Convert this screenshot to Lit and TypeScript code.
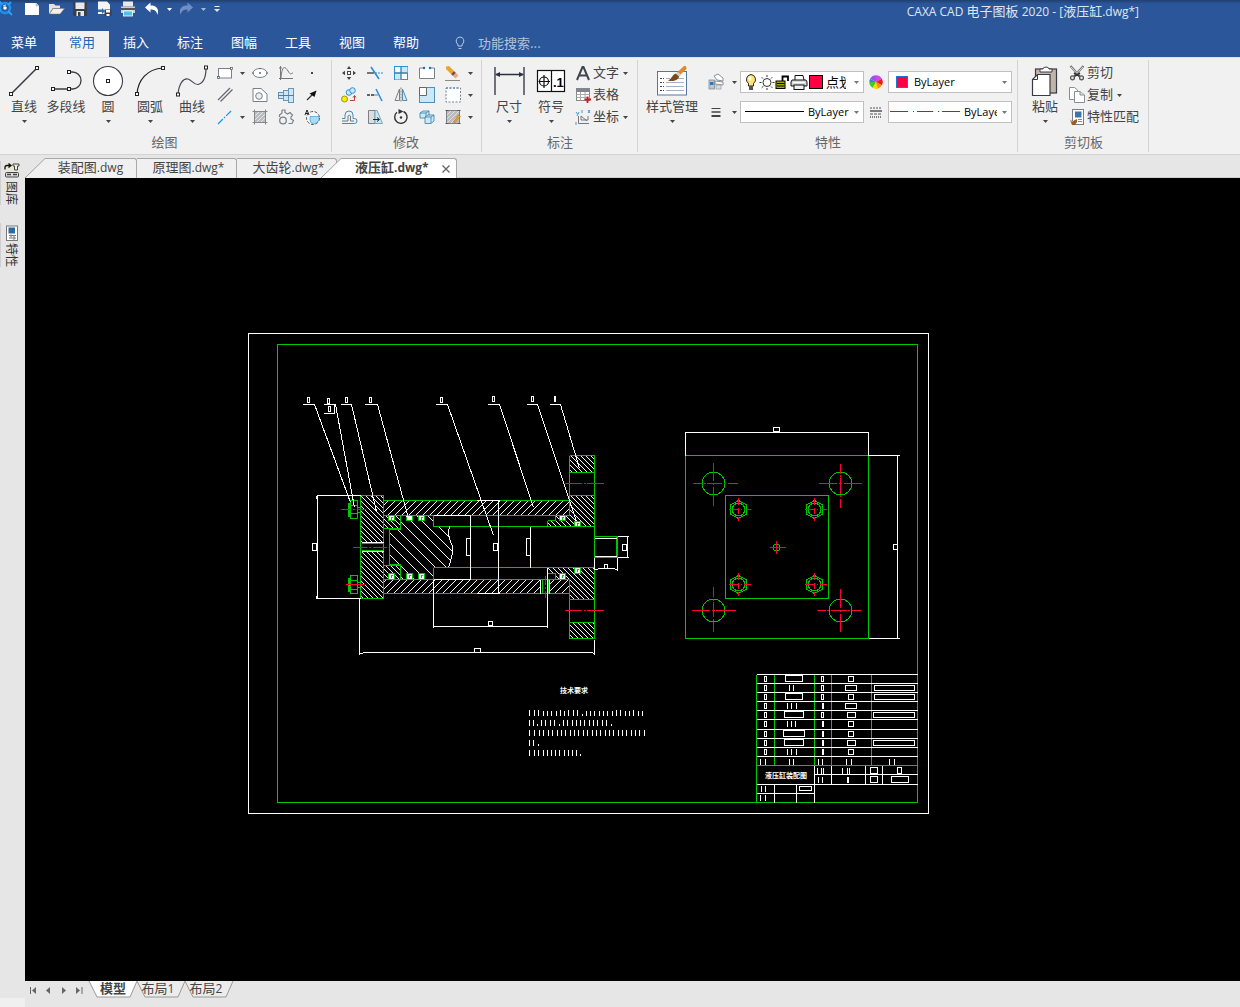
import { LitElement, html, svg, css, nothing } from "lit";
import { customElement } from "lit/decorators.js";

/* ---------- icons ---------- */

const sq = (x: number, y: number) =>
  svg`<rect x=${x - 1.5} y=${y - 1.5} width="3" height="3" fill="#fff" stroke="#222" stroke-width="1"/>`;

const BIG: Record<string, unknown> = {
  line: svg`<path d="M2 28L28 2" stroke="#3c3c46" stroke-width="1.6"/>${sq(2, 28)}${sq(28, 2)}`,
  pline: svg`<path d="M2 23H18M18 6H21.5A8.5 8.5 0 0 1 21.5 23H18" stroke="#3c3c46" stroke-width="1.3" fill="none"/>${sq(2, 23)}${sq(18, 23)}${sq(18, 6)}`,
  circle: svg`<circle cx="15" cy="15" r="14.5" fill="#fff" stroke="#3c3c46" stroke-width="1.1"/>${sq(15, 15)}`,
  arc: svg`<path d="M2 28C3 14 12 3 28 2" stroke="#222" stroke-width="1.2" fill="none"/>${sq(2, 28)}${sq(28, 2)}`,
  spline: svg`<path d="M1 28C2 18 6 12 11 13C15 14 17 19 21 18.500C27 17 29 11 29 2" stroke="#4a4a52" stroke-width="1.2" fill="none"/>${sq(1, 28.5)}${sq(29, 1.5)}`,
  dim: svg`<path d="M1 1V29M30 1V29M2 8.500H29" stroke="#2b3040" stroke-width="1.3"/><path d="M1 8.500l5-2.500v5zM30 8.500l-5-2.500v5z" fill="#2b3040"/>`,
  symbol: svg`<rect x="1.500" y="4.500" width="27" height="21" fill="#fff" stroke="#111" stroke-width="1.2"/><path d="M15.500 4V26M2.500 15.500H14M8 9V22" stroke="#111" stroke-width="1.2"/><circle cx="8" cy="15.500" r="4.500" fill="none" stroke="#111" stroke-width="1.2"/><text x="17" y="20.500" font-family="Liberation Sans, sans-serif" font-size="13" font-weight="700" fill="#000">.1</text>`,
  style: svg`<rect x=".500" y="5.500" width="29" height="23.500" fill="#fff" stroke="#54789a"/><path d="M3 12.500H7M3 16.500H7M3 20.500H7M3 24.500H7" stroke="#446" stroke-dasharray="2 1"/><path d="M9 12.500H13M20 12.500H27M9 16.500H27M9 20.500H27M9 24.500H27" stroke="#9fb2c8"/><path d="M27 0L29 0L29.500 3L22 10L19.500 7z" fill="#e08a2a"/><path d="M21 6l3 3-2 2-3.500-2.500z" fill="#c9d0d8"/><path d="M18.500 7.500C15 9 15 13 11 14.500C16 16 22 14 22 10.500z" fill="#7a4a1c"/>`,
  paste: svg`<rect x="5.500" y="3" width="21" height="24" fill="#bfb5a8" stroke="#3a3a44" stroke-width="1.2"/><path d="M10 4.500V3H13C13 .500 19 .500 19 3H22V6H10z" fill="#fff" stroke="#3a3a44"/><path d="M7.500 8.500H20V29.500H2.500V13.500z" fill="#fff" stroke="#3a3a44" stroke-width="1.2"/><path d="M7.500 8.500V13.500H2.500" fill="none" stroke="#3a3a44"/>`,
};

const B = "#2f8fd0";
const L = "#c8e9fa";
const G = "#7b8088";

const SMALL: Record<string, unknown> = {
  rect: svg`<rect x="3.500" y="5.500" width="13" height="9.500" fill="#fff" stroke="${G}"/><rect x="2.500" y="13.500" width="2" height="2" fill="#fff" stroke="#555" stroke-width=".7"/><rect x="15.500" y="4.500" width="2" height="2" fill="#fff" stroke="#555" stroke-width=".7"/>`,
  parallel: svg`<path d="M3 15L15 3M5.500 16.500L17.500 4.500" stroke="#666a72" stroke-width="1.3"/>`,
  axis: svg`<path d="M3 17L17 3" stroke="#1e9be0" stroke-width="1.3" stroke-dasharray="7 1.500 1.500 1.500"/>`,
  ellipse: svg`<ellipse cx="10" cy="10" rx="7" ry="4.500" fill="#fff" stroke="${G}"/><path d="M9 10h2M10 9v2M2 10h2M16 10h2M9 5.500h2" stroke="#666"/>`,
  hole: svg`<path d="M3 3.500H11L17 9V16.500H3z" fill="#fff" stroke="${G}"/><circle cx="9" cy="11" r="3.300" fill="#eee" stroke="${G}"/>`,
  hatch: svg`<rect x="4.500" y="4.500" width="11" height="11" fill="#b9bcc0" stroke="${G}"/><path d="M5 9l4-4M5 13l8-8M7 15l8-8M11 15l4-4" stroke="#f0f0f0" stroke-width=".8"/><path d="M2.500 4.500H17.500M2.500 15.500H17.500M4.500 2.500V17.500M15.500 2.500V17.500" stroke="#888"/>`,
  func: svg`<path d="M4.500 3V17M3 15.500H17M3 5H6" stroke="#777" fill="none"/><path d="M5 15C6 2 9 3 12 8S15 10 17 10" stroke="#777" fill="none"/>`,
  shaft: svg`<rect x="2.500" y="7.500" width="6" height="6" fill="${L}" stroke="#6b93b5"/><rect x="7.500" y="5.500" width="5" height="10" fill="${L}" stroke="#6b93b5"/><rect x="12.500" y="3.500" width="5" height="14" fill="${L}" stroke="#6b93b5"/><path d="M2 10.500H18" stroke="#678"/>`,
  gear: svg`<path d="M6 3H9V5.500L11.500 7L14 5.500L16.500 8L15 10V12L17.500 13.500L16 16.500H12.500" fill="none" stroke="${G}" stroke-width="1.2"/><path d="M6 3V6L3.500 8V10" fill="none" stroke="${G}" stroke-width="1.2"/><circle cx="7" cy="13.500" r="3.300" fill="none" stroke="${G}" stroke-width="1.3"/>`,
  point: svg`<rect x="9" y="9" width="2" height="2" fill="#444"/>`,
  arrow: svg`<path d="M5 15L11 9" stroke="#333" stroke-width="1.2"/><path d="M14.500 5.500L12.500 12L7.500 8.500z" fill="#111"/>`,
  detail: svg`<circle cx="11" cy="11" r="6.500" fill="#f6f6f6" stroke="#555" stroke-dasharray="3 1.500"/><path d="M8 9.500H17V13Q15 17 11.500 17Q8 16 8 13z" fill="#a8dcf5" stroke="${B}" stroke-width=".6"/><path d="M3 8L5 3L7 8M3.500 6.500H6.500" stroke="#222" fill="none"/>`,
  move: svg`<rect x="8.500" y="8.500" width="3" height="3" fill="#fff" stroke="#444"/><path d="M10 3l2.200 3H7.800zM10 17l2.200-3H7.800zM3 10l3-2.200v4.400zM17 10l-3-2.200v4.400z" fill="#444"/>`,
  trim: svg`<path d="M2 10H9" stroke="#333" stroke-width="1.300"/><path d="M10 10H18" stroke="${B}" stroke-dasharray="2 1"/><path d="M6 4L14 16" stroke="${B}" stroke-width="1.600"/>`,
  array: svg`<rect x="3.500" y="3.500" width="13" height="13" fill="#fff" stroke="${B}"/><rect x="10" y="4" width="6.500" height="6" fill="${L}"/><rect x="4" y="10" width="6" height="6.500" fill="${L}"/><path d="M10 3.500V16.500M3.500 10H16.500" stroke="#3a7da8" stroke-width="1.300"/>`,
  break: svg`<path d="M5 5H2.500V15.500H17.500V5H15" fill="#fff" stroke="${G}"/><path d="M5 5H8M12 5H15" stroke="${G}"/><circle cx="7" cy="5" r="1.200" fill="#1473b8"/><circle cx="13" cy="5" r="1.200" fill="#1473b8"/>`,
  erase: svg`<path d="M3 3.500L6 3L11 8L8 11L3 6z" fill="#f0a22c"/><path d="M11 8L13 10L10 13L8 11z" fill="#7a5236"/><path d="M13 10L15.500 12.500L12.500 15.500L10 13z" fill="#e8a888"/><path d="M2 17.500H17" stroke="#888"/>`,
  copyObj: svg`<circle cx="5.500" cy="14" r="3" fill="#ffee00" stroke="#8a7a20" stroke-width=".8"/><circle cx="10" cy="7.500" r="2.800" fill="${L}" stroke="${B}"/><circle cx="13.500" cy="5.500" r="2.800" fill="${L}" stroke="${B}"/><path d="M11 15.500H15.500V11M14 12.500l1.500-2 1.500 2" stroke="#b22" fill="none" stroke-width=".9"/>`,
  extend: svg`<path d="M2 10H9" stroke="#333" stroke-width="1.300" stroke-dasharray="3 1"/><path d="M9 10H13" stroke="${B}"/><path d="M11 4L17 16" stroke="${B}" stroke-width="1.500"/>`,
  mirror: svg`<path d="M8.500 4V15.500H4z" fill="#eee" stroke="${G}"/><path d="M11.500 4V15.500H16z" fill="${L}" stroke="#5a8cb0"/><path d="M10 2.500V17.500" stroke="#777" stroke-dasharray="2 1"/>`,
  scale: svg`<rect x="2.500" y="2.500" width="15" height="15" fill="${L}" stroke="#4f8fb8"/><path d="M2.500 2.500H9.500V10.500H2.500z" fill="#fff" stroke="#666"/>`,
  stretch: svg`<rect x="3" y="3" width="14.500" height="14" fill="#fff" stroke="${G}" stroke-dasharray="2 1.500"/><path d="M3 3H17" stroke="${B}" stroke-dasharray="2 1.500"/>`,
  offset: svg`<path d="M3 16.500H15.500A2.500 2.500 0 0 0 15.500 11.500H14V8A4 4 0 0 0 6 8V11.500H3" fill="#e4f3fb" stroke="#5487ad"/><path d="M3 14H9V9A1.500 1.500 0 0 1 11.500 9V14H15" fill="none" stroke="#777"/>`,
  chamfer: svg`<path d="M3.500 3.500H10V16.500H3.500z" fill="#ddd" stroke="${G}"/><path d="M10 3.500H12L17.500 16.500H10z" fill="${L}" stroke="#7ab"/><path d="M8 12.500H14M12 10.500l2.500 2-2.500 2" stroke="#222" fill="none"/>`,
  rotate: svg`<path d="M12.500 4.500A6.200 6.200 0 1 1 6 5.300" fill="none" stroke="#333" stroke-width="1.400"/><path d="M7.500 2l5 2.500-5 2.500z" fill="#333"/><circle cx="10" cy="10.500" r="1.200" fill="#333"/>`,
  block: svg`<path d="M3 6L6 4H12V9L9 11H3zM3 6H9V11M9 6L12 4" fill="${L}" stroke="#3e7ba6" stroke-width=".8"/><path d="M8 10L11 8H17V14L14 16.500H8zM8 10H14V16M14 10L17 8" fill="${L}" stroke="#3e7ba6" stroke-width=".8"/>`,
  hatchEdit: svg`<rect x="3.500" y="3.500" width="13" height="13" fill="#bbb" stroke="${G}"/><path d="M4 8l4-4M4 12l8-8M4 16L16 4M8 16l8-8M12 16l4-4" stroke="#eee" stroke-width=".7"/><path d="M2.500 3.500h3M14.500 3.500h3M2.500 16.500h3M14.500 16.500h3" stroke="#555"/><path d="M10.500 15L15.500 8L17.500 9.500L12.500 15.500z" fill="#f0a22c" stroke="#8a5a2a" stroke-width=".5"/>`,
  letterA: svg`<path d="M4 17L9.500 4H10.500L16 17M6 12.500H14" fill="none" stroke="#3f4450" stroke-width="2"/>`,
  table: svg`<rect x="3.500" y="3.500" width="13" height="12" fill="#fff" stroke="#888"/><rect x="3" y="3" width="14" height="4" fill="#80858e"/><path d="M3.500 9.500H16.500M3.500 12.500H16.500M7.500 7V15.500M12 7V15.500" stroke="#aaa"/><path d="M14.500 11.500V18M11.500 14.500H18" stroke="#c81e1e" stroke-width="1.800"/>`,
  coord: svg`<path d="M5.500 9V16.500H16M8 9V13H15V9M8 9L14 14" fill="none" stroke="#777"/><path d="M9 3v3M15 3l2 3M17 3l-2 3M3 5l1.500 2M6 5l-2 4M3 15v3" stroke="${B}" stroke-width=".9"/>`,
  layers: svg`<path d="M8 4L12 2L17 6V9L11 8zM9 9L17 10V13L9 12z" fill="#fff" stroke="#8c9096"/><rect x="3" y="8" width="5.500" height="9" fill="#b9c6d4" stroke="#76808c" stroke-width=".7"/><rect x="4" y="10" width="3.500" height="3" fill="#2a7ab8"/><rect x="10" y="13" width="5" height="4" fill="#ddd" stroke="#999" stroke-width=".7"/>`,
  weight: svg`<path d="M5.500 6.500H14.500" stroke="#444"/><path d="M5.500 10H14.500" stroke="#444" stroke-width="1.500"/><path d="M5.500 14H14.500" stroke="#444" stroke-width="2"/>`,
  wheel: svg`<path d="M10 10L4.200 6.650A6.700 6.700 0 0 1 10 3.300z" fill="#a050f0"/><path d="M10 10V3.300A6.700 6.700 0 0 1 15.800 6.650z" fill="#c84ae8"/><path d="M10 10L15.800 6.650A6.700 6.700 0 0 1 15.800 13.350z" fill="#f01818"/><path d="M10 10L15.800 13.350A6.700 6.700 0 0 1 10 16.700z" fill="#ff8c00"/><path d="M10 10L12 16.400A6.700 6.700 0 0 1 6 15.400z" fill="#ffd800"/><path d="M10 10L6.500 15.700A6.700 6.700 0 0 1 3.300 10z" fill="#40c832"/><path d="M10 10H3.300A6.700 6.700 0 0 1 4.200 6.650z" fill="#3c78f0"/>`,
  ltype: svg`<path d="M4 6H16" stroke="#555" stroke-dasharray="2 1"/><path d="M4 9H16" stroke="#555" stroke-width="1.500"/><path d="M4 12H16" stroke="#555" stroke-dasharray="3 1"/><path d="M4 15H16" stroke="#555" stroke-width="1.500" stroke-dasharray="1 1"/>`,
  cut: svg`<path d="M3.500 3L12 12.500M16.500 3L8 12.500" stroke="#777" stroke-width="2.200"/><path d="M4 4L12 12.500M16 4L8 12.500" stroke="#eee" stroke-width=".8"/><path d="M7 10L13 13.500M13 10L7 13.500" stroke="#333" stroke-width="1.800"/><circle cx="5.500" cy="14.800" r="2" fill="#ddd" stroke="#555" stroke-width="1.200"/><circle cx="14.500" cy="14.800" r="2" fill="#ddd" stroke="#555" stroke-width="1.200"/>`,
  copy: svg`<path d="M2.500 2.500H7.500L10.500 5V14.500H2.500z" fill="#fff" stroke="#8a8e94"/><path d="M7.500 6.500H13L17.500 10V17.500H7.500z" fill="#fff" stroke="#8a8e94"/><path d="M13 6.500V10H17.500" fill="#ddd" stroke="#8a8e94"/>`,
  match: svg`<rect x="5.500" y="2.500" width="11" height="15" fill="#fff" stroke="#75808c"/><rect x="8" y="4.500" width="6.500" height="6" fill="#3a78ac"/><path d="M11 12.500H15M11 14.500H15" stroke="#888"/><path d="M3 13L6 14L10 12V15L8 18H5z" fill="#a05a22"/><path d="M2.500 12l3 3" stroke="#ddd"/>`,
  bulb: svg`<path d="M10 2.500A5 5 0 0 0 7.500 11.500V14H12.500V11.500A5 5 0 0 0 10 2.500z" fill="#ffe27a" stroke="#111" stroke-width=".9"/><ellipse cx="9" cy="6.500" rx="1.600" ry="2.200" fill="#fffbe0"/><rect x="8" y="14" width="4" height="4" fill="#555"/>`,
  sun: svg`<circle cx="10" cy="10.500" r="4" fill="#fff" stroke="#333"/><path d="M10 3V5M10 16V18M2.500 10.500H4.500M15.500 10.500H17.500M4.700 5.200L6 6.500M14 14.500L15.300 15.800M4.700 15.800L6 14.500M14 6.500L15.300 5.200" stroke="#333"/>`,
  lock: svg`<rect x="3" y="9" width="9" height="7.500" fill="#a8a800" stroke="#000"/><path d="M4 11.500H11.500M4 14H11.500" stroke="#000"/><path d="M9.500 9V4.500H15V9" fill="none" stroke="#000" stroke-width="1.800"/>`,
  printer: svg`<path d="M6 8V3.500H14L15 8" fill="#fff" stroke="#111"/><path d="M3 8H17L18 10V14H2V10z" fill="#d8d8d8" stroke="#111"/><rect x="5" y="13" width="10" height="4.500" fill="#e8f4f8" stroke="#111"/><path d="M4 10.500H16" stroke="#fff"/>`,
  qNew: svg`<path d="M3 4H14L17 7V16H3z" fill="#fff"/><path d="M14 4V7H17" fill="#cfd8e6" stroke="#9ab" stroke-width=".6"/>`,
  qOpen: svg`<path d="M3 5H8L9.500 6.500H14V9H7L3 15z" fill="#e8e2d4"/><path d="M7 9.500H18.500L14 15H3.500z" fill="#f6f1e6" stroke="#777" stroke-width=".5"/>`,
  qSave: svg`<path d="M3 3H17V17H4L3 16z" fill="#3a3f48"/><rect x="5.500" y="3.500" width="9" height="6.500" fill="#e6e9ee"/><rect x="6.500" y="12" width="7.500" height="5" fill="#e6e9ee"/><rect x="8" y="13" width="2.500" height="4" fill="#3a3f48"/>`,
  qSaveAs: svg`<path d="M4 2.500H13L16 5.500V15H4z" fill="#f4f4f4"/><path d="M4 10.500H8V9L11 12L8 15V13H4z" fill="#2f6ab0"/><rect x="10.500" y="10.500" width="7" height="6.500" fill="#3a3f48"/><rect x="12" y="11" width="4" height="2.500" fill="#fff"/><rect x="12.500" y="15" width="3" height="2" fill="#fff"/>`,
  qPrint: svg`<rect x="5" y="2.500" width="10" height="5" fill="#e8e8e8"/><path d="M3 7.500H17V14H3z" fill="#c9ccd2"/><path d="M3 10H17" stroke="#555" stroke-width="2"/><rect x="5.500" y="12" width="9" height="5" fill="#48c4e8" stroke="#fff" stroke-width=".8"/>`,
  qUndo: svg`<path d="M3 8.500L8.500 3.500V6.500C14 6.500 17.500 9 15.500 16C14.500 11.500 12 10.500 8.500 10.500V13.500z" fill="#fff"/>`,
  qRedo: svg`<path d="M17 8.500L11.500 3.500V6.500C6 6.500 2.500 9 4.500 16C5.500 11.500 8 10.500 11.500 10.500V13.500z" fill="#6f8fc2"/>`,
  qMore: svg`<path d="M7.500 7.500H12.500" stroke="#fff"/><path d="M7 10H13L10 13z" fill="#dfe6f2"/>`,
  logo: svg`<circle cx="11" cy="9" r="5" fill="none" stroke="#1e8fe8" stroke-width="2.600"/><circle cx="11" cy="9" r="1.800" fill="#fff"/><path d="M5 2L8 5M14 12L18 16M4 13L7 11M17 3L14 6" stroke="#2aa0ff" stroke-width="1.800"/><path d="M9 7L12 6" stroke="#bfe2ff"/>`,
  hint: svg`<path d="M10 4A4 4 0 0 0 7.500 11C8 12 8 12 8 13H12C12 12 12 12 12.500 11A4 4 0 0 0 10 4z" fill="none" stroke="#b9c7df"/><path d="M8.500 15.500H11.500" stroke="#b9c7df"/>`,
  library: svg`<rect x="3" y="2" width="14" height="7" fill="#e9e8cf"/><path d="M3 8.500V6.500Q3 4.500 5 4.500H8M6.500 2.500l2.500 2-2.500 2" stroke="#111" stroke-width="1.300" fill="none"/><path d="M11 3H17V5H15.500V9H12.500V5H11z" fill="#eee" stroke="#444"/><rect x="3.500" y="11.500" width="13" height="4.500" rx="1" fill="#ddd" stroke="#444"/><path d="M5 13.500H9M11 13.500H15" stroke="#444" stroke-width="1.500"/>`,
  props: svg`<rect x="4.500" y="3" width="11" height="14.500" fill="#fff" stroke="#777"/><rect x="6.500" y="4.500" width="6.500" height="6" fill="#2a6aa0"/><path d="M7 12.500H14M7 15H14M9 11.500v3M12 13v4" stroke="#777"/>`,
};

const small = (n: string) =>
  html`<svg class="ic" viewBox="0 0 20 20" width="20" height="20" aria-hidden="true">${SMALL[n]}</svg>`;
const big = (n: string) =>
  html`<svg class="big-ic" viewBox="0 0 30 30" width="30" height="30" aria-hidden="true">${BIG[n]}</svg>`;
const caret = () =>
  html`<svg class="caret" viewBox="0 0 5 3" width="5" height="3" aria-hidden="true"><path d="M0 0H5L2.500 3z" fill="currentColor"/></svg>`;

/* ---------- drawing ---------- */

type Seg = [number, number, number, number];
const line = (s: Seg[]) => s.map(([a, b, c, d]) => `M${a} ${b}L${c} ${d}`).join("");
const box = (s: Seg[]) => s.map(([a, b, c, d]) => `M${a} ${b}H${c}V${d}H${a}Z`).join("");

const LEADERS: Seg[] = [
  [302, 404, 314, 404], [314, 404, 350, 502],
  [323, 404, 335, 404], [335, 404, 354, 507], [323, 413, 334, 413], [334, 404, 334, 413],
  [340, 404, 351, 404], [351, 404, 376, 511],
  [364, 404, 376, 404], [377, 404, 408, 518],
  [435, 404, 447, 404], [447, 404, 493, 535],
  [487, 404, 499, 404], [499, 404, 533, 507],
  [526, 404, 537, 404], [537, 404, 576, 521],
  [549, 404, 560, 404], [560, 404, 579, 468],
];
const LEADER_NUMS: Seg[] = [
  [307, 397, 309, 402], [327, 398, 329, 403], [328, 406, 330, 411], [345, 397, 347, 402],
  [369, 397, 371, 402], [440, 397, 442, 402], [492, 396, 494, 401], [531, 396, 533, 401], [554, 396, 555, 401],
];
const SECTION_GREEN: Seg[] = [
  [383, 500, 569, 500], [383, 515, 569, 515], [383, 579, 569, 579], [383, 593, 569, 593],
  [433, 515, 433, 526], [433, 567, 433, 579], [433, 526, 594, 526], [433, 567, 594, 567],
  [400, 515, 400, 529], [389, 529, 400, 529], [389, 528, 400, 528], [400, 565, 400, 579], [389, 565, 400, 565], [389, 564, 400, 564],
  [361, 543, 383, 543], [361, 550, 383, 550],
  [350, 505, 357, 505], [350, 513, 357, 513], [357, 507, 360, 507], [357, 512, 360, 512],
  [350, 580, 357, 580], [350, 589, 357, 589], [357, 582, 360, 582], [357, 587, 360, 587],
  [348, 502, 348, 516], [349, 502, 349, 516], [348, 577, 348, 591], [349, 577, 349, 591],
  [569, 472, 594, 472], [569, 495, 594, 495], [569, 599, 594, 599], [569, 622, 594, 622],
  [569, 455, 569, 515], [569, 579, 569, 638], [594, 455, 594, 638], [569, 455, 594, 455], [569, 638, 594, 638],
  [547, 526, 547, 520], [547, 520, 555, 520], [555, 520, 555, 515],
  [547, 573, 555, 573], [555, 573, 555, 579], [542, 579, 542, 593], [548, 579, 548, 593],
  [594, 536, 617, 536], [594, 557, 617, 557], [616, 536, 616, 557], [617, 536, 617, 557],
];
const SECTION_BOXES: Seg[] = [
  [360, 495, 383, 598], [383, 528, 389, 565], [350, 500, 357, 518], [350, 575, 357, 593],
];
const SEALS: Seg[] = [
  [388, 515, 394, 520], [406, 515, 412, 520], [418, 515, 424, 520],
  [388, 573, 394, 579], [406, 573, 412, 579], [418, 573, 424, 579],
  [559, 515, 565, 520], [574, 521, 580, 526], [574, 567, 580, 573], [559, 573, 565, 579],
];
const DIMS: Seg[] = [
  [317, 495, 317, 598], [316, 495, 360, 495], [316, 598, 360, 598], [316, 495, 316, 498], [316, 595, 316, 598],
  [361, 542, 383, 542], [361, 551, 383, 551],
  [470, 515, 470, 579], [433, 515, 470, 515], [433, 579, 470, 579], [498, 500, 498, 593],
  [476, 500, 499, 500], [476, 593, 499, 593], [530, 526, 530, 567],
  [540, 579, 540, 593], [549, 579, 549, 593], [547, 567, 547, 627], [433, 579, 433, 627], [433, 626, 547, 626],
  [359, 598, 359, 654], [359, 653, 362, 653], [362, 652, 592, 652], [592, 653, 594, 653], [594, 639, 594, 654],
  [594, 538, 616, 538], [594, 556, 616, 556], [617, 536, 628, 536], [617, 557, 628, 557], [627, 536, 627, 557],
  [617, 557, 617, 570], [594, 557, 594, 569], [597, 568, 614, 568], [594, 569, 597, 569], [614, 569, 617, 569],
  [685, 431, 685, 455], [868, 431, 868, 455], [685, 432, 868, 432],
  [868, 455, 899, 455], [868, 638, 899, 638], [897, 455, 897, 638],
];
const DIM_BOXES: Seg[] = [
  [312, 543, 316, 550], [466, 538, 470, 555], [493, 543, 497, 550], [526, 538, 530, 555],
  [488, 621, 492, 625], [474, 648, 480, 652], [622, 544, 626, 550], [604, 564, 607, 568],
  [773, 427, 779, 431], [893, 544, 897, 549],
];
const CENTER_LINES: Seg[] = [
  [341, 509, 350, 509], [353, 509, 354, 509], [357, 509, 365, 509], [346, 584, 364, 584],
  [353, 547, 366, 547], [369, 547, 370, 547], [373, 547, 386, 547],
  [545, 576, 545, 584], [545, 587, 545, 588], [545, 591, 545, 597],
  [565, 483, 581, 483], [584, 483, 585, 483], [587, 483, 603, 483],
  [565, 610, 581, 610], [584, 610, 585, 610], [587, 610, 603, 610],
  [693, 483, 702, 483], [704, 483, 705, 483], [707, 483, 721, 483], [724, 483, 725, 483], [728, 483, 737, 483],
  [713, 463, 713, 480], [713, 483, 713, 484], [713, 487, 713, 505],
  [819, 483, 836, 483], [839, 483, 841, 483], [844, 483, 861, 483],
  [840, 464, 840, 473], [840, 475, 840, 476], [840, 478, 840, 493], [840, 495, 840, 496], [840, 499, 840, 507],
  [692, 610, 709, 610], [712, 610, 714, 610], [716, 610, 735, 610],
  [713, 587, 713, 596], [713, 599, 713, 600], [713, 602, 713, 616], [713, 619, 713, 620], [713, 622, 713, 631],
  [817, 610, 825, 610], [827, 610, 828, 610], [831, 610, 846, 610], [848, 610, 849, 610], [852, 610, 860, 610],
  [840, 589, 840, 607], [840, 610, 840, 611], [840, 614, 840, 631],
];
const HOLES = [[713, 483], [840, 483], [713, 610], [840, 610]];
const BOLTS = [[738, 509], [814, 509], [738, 584], [814, 584]];

const ROW_Y = [674, 683, 692, 701, 710, 719, 729, 738, 747, 756];
const PARTS = [
  { name: [785, 802], qty: 0, mat: [848, 853] },
  { ticks: [789, 793], qty: 0, mat: [845, 856], note: 874 },
  { name: [785, 802], qty: 0, mat: [848, 853], note: 874 },
  { ticks: [787, 791, 796], qty: 1, mat: [845, 856] },
  { name: [784, 803], qty: 0, mat: [847, 855], note: 873 },
  { ticks: [787, 791, 795], qty: 1, mat: [848, 853] },
  { name: [783, 804], qty: 1, mat: [848, 853] },
  { name: [784, 803], qty: 1, mat: [847, 855], note: 873 },
  { ticks: [787, 791, 796], qty: 1, mat: [848, 853] },
] as { name?: number[]; ticks?: number[]; qty: number; mat: number[]; note?: number }[];

const partRow = (p: (typeof PARTS)[number], i: number) => {
  const y = ROW_Y[i] + 2;
  const b = y + 5;
  const boxes: Seg[] = [[764, y, 766, b], [p.mat[0], y, p.mat[1], b], [p.qty ? 822 : 821, y, 823, b]];
  if (p.name) boxes.push([p.name[0], y - 1, p.name[1], b]);
  if (p.note) boxes.push([p.note, y, 914, b]);
  return svg`<path d=${box(boxes) + line((p.ticks ?? []).map((x) => [x, y - 1, x, b] as Seg))}/>`;
};

/* Each note row lists tick offsets; a negative offset is a punctuation mark. */
const NOTES: [number, number[]][] = [
  [709, [0, 5, 9, 14, 18, 22, 27, 31, 35, 39, 44, 48, -53, 57, 61, 65, 70, 74, 78, 83, 87, 91, 96, 100, 104, 109, 113]],
  [719, [0, 4, -8, 12, 16, 21, 25, -30, 34, 38, 43, 47, 51, 55, 60, 64, 68, 73, 77, -82]],
  [729, [0, 5, 10, 14, 19, 23, 28, 32, 36, 41, 45, 49, 54, 58, 63, 67, 71, 76, 80, 84, 89, 93, 97, 102, 106, 110, 115]],
  [739, [0, 4, -9]],
  [749, [0, 5, 9, 14, 18, 22, 26, 30, 35, 39, 43, 47, -51]],
];
const SHORT = new Set([14, 18, 22, 27, 35, 57, 61, 65, 70, 74, 78, 83, 96, 100, 109, 113]);
const notes = NOTES.map(([y, xs]) =>
  line(xs.map((x) => {
    const top = x < 0 ? y + 4 : y === 709 && SHORT.has(x) ? y + 1 : y;
    return [529 + Math.abs(x), top, 529 + Math.abs(x), y + 6] as Seg;
  })),
).join("");

const hatch = (id: string, n: number, back: boolean) => svg`
  <pattern id=${id} width=${n} height=${n} patternUnits="userSpaceOnUse">
    ${Array.from({ length: n }, (_, i) => svg`<rect x=${back ? i : n - 1 - i} y=${i} width="1" height="1" fill="#fff"/>`)}
  </pattern>`;

const drawing = () => html`
  <svg class="sheet" viewBox="25 178 1215 803" preserveAspectRatio="xMinYMin meet" shape-rendering="crispEdges"
    role="img" aria-label="液压缸装配图">
    <defs>${hatch("hb", 5, true)}${hatch("hf", 7, false)}${hatch("hw", 11, true)}</defs>
    <g>
      <path fill="url(#hb)" d="M361 496H383V542H361zM361 552H383V598H361zM383 516H400V528H383zM383 566H400V579H383zM570 456H594V472H570zM570 496H594V526H570zM570 568H594V599H570zM570 623H594V638H570zM555 516H570V526H547V521H555zM547 568H570V579H555V573H547z"/>
      <path fill="url(#hf)" d="M384 501H569V515H384zM384 580H540V593H384zM550 580H569V593H550z"/>
      <path fill="url(#hw)" d="M401 516H433V527H449Q447 534 450 541Q454 548 451 556Q450 562 448 567H433V579H401V564H390V530H401z"/>
    </g>
    <g transform="translate(.5 .5)" fill="none" stroke-width="1">
      <g stroke="#00c800">
        <rect x="277" y="344" width="640" height="458"/>
        <path d=${line(SECTION_GREEN) + box(SECTION_BOXES)}/>
        <path d=${box(SEALS)} fill="#fff"/>
        <path d="M685 455H868V638H685zM725 495H828V598H725z"/>
        ${HOLES.map(([x, y]) => svg`<circle cx=${x} cy=${y} r="11.3"/>`)}
        ${BOLTS.map(([x, y]) => svg`<circle cx=${x} cy=${y} r="6.3"/><path d="M${x} ${y - 9}L${x + 8} ${y - 4.500}V${y + 4.500}L${x} ${y + 9}L${x - 8} ${y + 4.500}V${y - 4.500}Z"/>`)}
        <circle cx="776" cy="547" r="3.3"/>
      </g>
      <g stroke="#fff">
        <rect x="248" y="333" width="680" height="480"/>
        <path d=${line(LEADERS) + box(LEADER_NUMS) + line(DIMS) + box(DIM_BOXES)}/>
        <path d=${SEALS.map(([a, b]) => `M${a + 3} ${b + 1}v3M${a + 2} ${b + 2}h2`).join("")} stroke="#00c800"/>
        <path d="M449 526Q447 534 450 541Q454 548 451 556Q450 562 448 567"/>
        <path d="M406 516H410V519H408z" fill="#fff"/>
        <path d=${notes}/>
      </g>
      <g stroke="#ff0032">
        <path d=${line(CENTER_LINES)} stroke-linecap="square"/>
        ${BOLTS.map(([x, y]) => svg`<path d="M${x - 10} ${y}h9m3 0h1m2 0h7M${x} ${y - 12}v7m0 3v6m0 3v4"/>`)}
        <path d="M769 547H785M776 540V553"/>
      </g>
      <g stroke="#00c800"><path d="M756 674V802M774 674V765M814 674V765M831 674V765M871 674V765M756 765H917"/></g>
      <g stroke="#fff">
        <path d=${ROW_Y.map((y) => `M756 ${y}H917`).join("")}/>
        <path d="M814 774H917M756 784H917M756 793H814M814 765V802M831 765V784M865 765V784M882 765V784M774 784V802M796 784V802"/>
        ${PARTS.map(partRow)}
        <path d="M760 758V764M765 758V764M789 758V764M793 758V764M818 758V764M822 758V764M846 758V764M851 758V764M889 758V764M894 758V764M817 767V773M821 767V773M823 767V773M842 767V773M847 767V773M849 767V773M818 776V782M822 776V782M847 776V782M848 776V782M761 785V791M765 785V791M760 794V800M765 794V800"/>
        <path d=${box([[870, 767, 877, 773], [897, 767, 901, 773], [870, 776, 877, 782], [891, 776, 908, 782], [799, 786, 811, 790]])}/>
      </g>
    </g>
    <text class="cad" x="574" y="693" text-anchor="middle">技术要求</text>
    <text class="cad" x="786" y="778" text-anchor="middle">液压缸装配图</text>
  </svg>`;

/* ---------- application ---------- */

const MENUS = ["插入", "标注", "图幅", "工具", "视图", "帮助"];
const DRAW_BIG: [string, string, boolean][] = [
  ["line", "直线", true], ["pline", "多段线", false], ["circle", "圆", true], ["arc", "圆弧", true], ["spline", "曲线", true],
];
const DRAW_SMALL = [
  ["rect", "矩形", "^"], ["ellipse", "椭圆"], ["func", "公式曲线"], ["point", "点"],
  ["parallel", "平行线", ""], ["hole", "孔"], ["shaft", "轴"], ["arrow", "箭头"],
  ["axis", "中心线", "^"], ["hatch", "剖面线"], ["gear", "齿形"], ["detail", "局部放大"],
];
const EDIT = [
  ["move", "平移"], ["trim", "裁剪"], ["array", "阵列"], ["break", "打断"], ["erase", "删除"],
  ["copyObj", "平移复制"], ["extend", "延伸"], ["mirror", "镜像"], ["scale", "缩放"], ["stretch", "拉伸"],
  ["offset", "等距线"], ["chamfer", "过渡"], ["rotate", "旋转"], ["block", "分解"], ["hatchEdit", "编辑填充"],
];

@customElement("app-root")
export class AppRoot extends LitElement {
  static styles = css`
    :host { display: block; }
    * { box-sizing: border-box; }
    .app {
      display: flex; flex-direction: column; min-height: 100vh; background: #e6e6e6; color: #444;
      font: 13px/20px "Noto Sans CJK SC", sans-serif;
    }
    button, select, input { font: inherit; color: inherit; border: 0; background: none; padding: 0; margin: 0; }
    svg { display: block; flex: none; overflow: visible; }
    .lat { font-family: "Open Sans", "Noto Sans", sans-serif; font-size: 12px; }

    .top { background: linear-gradient(#203f70, #2b579a 4px); color: #fff; }
    .title { display: flex; align-items: center; height: 20px; padding-right: 101px; }
    .quick { display: flex; align-items: center; flex: 1; height: 18px; align-self: flex-start; }
    .quick button { display: flex; justify-content: center; width: 24px; }
    .quick .app-logo { width: 20px; margin-left: -6px; margin-right: 6px; }
    .quick .narrow { width: 10px; }
    .quick .last { width: 18px; }
    .quick .dim { color: #a9b9d4; }
    .caption { color: #dfe6f2; white-space: nowrap; padding-top: 2px; }
    .menus { display: flex; align-items: flex-end; height: 37px; padding-left: 1px; }
    .menus > button { width: 54px; height: 26px; padding-bottom: 4px; }
    .menus > .first { padding-right: 8px; }
    .menus > .on { background: #f1f1f1; color: #1a66b8; }
    .search { display: flex; align-items: center; height: 26px; margin-left: 17px; gap: 8px; padding-bottom: 2px; }
    .search input { width: 120px; outline: 0; }
    .search input::placeholder { color: #b4c3dc; opacity: 1; }

    .ribbon { display: flex; height: 98px; background: #f1f1f1; border-bottom: 1px solid #d2d2d2; border-top: 1px solid #dfe3ea; }
    .group { display: flex; flex-direction: column; justify-content: space-between; position: relative; padding: 4px 0 2px; margin: 0; }
    .group::after { content: ""; position: absolute; right: 0; top: 2px; bottom: 2px; width: 1px; background: #d4d4d4; }
    .group h2 { font: inherit; color: #666; margin: 0; text-align: center; padding-right: 6px; }
    .row { display: flex; align-items: flex-start; }
    .g-draw { width: 332px; padding-left: 3px; }
    .g-edit { width: 150px; padding-left: 4px; }
    .g-note { width: 156px; padding-left: 6px; }
    .g-prop { width: 380px; padding-left: 6px; }
    .g-clip { width: 131px; padding-left: 6px; }
    .big { display: flex; flex-direction: column; align-items: center; width: 42px; padding-top: 4px; white-space: nowrap; }
    .big .caret { margin-top: 4px; }
    .wide { width: 56px; }
    .grid { display: grid; grid-auto-rows: 22px; align-items: center; justify-items: center; }
    .grid button { display: flex; align-items: center; justify-content: center; height: 22px; }
    .cols-draw { grid-template-columns: 24px 10px 26px 26px 26px; }
    .cols-edit { grid-template-columns: repeat(5, 26px) 8px; }
    .list { display: flex; flex-direction: column; padding-left: 1px; }
    .list button { display: flex; align-items: center; height: 22px; white-space: nowrap; }
    .list span { padding-bottom: 3px; }
    .list .caret { margin-left: 4px; }
    .props { display: grid; grid-template-columns: 24px 12px 124px 24px 124px; grid-auto-rows: 22px; row-gap: 8px; padding-top: 9px; margin-left: 4px; align-items: center; justify-items: center; }
    .combo { display: flex; align-items: center; width: 124px; height: 22px; border: 1px solid #c0c0c0; background: #fff; color: #000; padding: 0 4px 0 2px; }
    .combo select { appearance: none; flex: 1; min-width: 0; height: 20px; overflow: hidden; text-overflow: clip; white-space: nowrap; outline: 0; }
    .combo .lat { font-size: 11px; }
    .combo .caret { color: #777; margin-left: 5px; }
    .layer { padding-left: 0; }
    .layer .ic { margin-right: -4px; }
    .layer .caret { margin-left: 8px; }
    .swatch { width: 14px; height: 14px; flex: none; background: #ff0040; border: 1px solid #000; margin: 0 3px 0 4px; }
    .color { width: 12px; height: 12px; border-color: #1976c8; margin: 0 6px 0 5px; }
    .stroke { margin-left: 2px; margin-right: 4px; }
    .stroke-red { margin-left: -1px; margin-right: 4px; }

    .work { display: flex; flex: 1; }
    .side { display: flex; flex-direction: column; width: 25px; gap: 18px; padding-top: 6px; }
    .side button { display: flex; flex-direction: column; align-items: center; padding-right: 2px; color: #333; border-left: 1px solid #cfcfcf; }
    .side span { writing-mode: vertical-rl; text-orientation: sideways; font-size: 12px; line-height: 18px; }
    .corner { margin-top: auto; height: 9px; background: #f0f0f0; }
    .main { display: flex; flex-direction: column; flex: 1; min-width: 0; }
    .docs { display: flex; align-items: flex-end; height: 23px; border-bottom: 1px solid #cfcfcf; }
    .doc { display: flex; height: 20px; margin-bottom: -1px; }
    .doc .tab { background: #f0f0f0; border: 1px solid #a8a8a8; border-width: 1px 1px 0 0; height: 20px; line-height: 16px; padding-bottom: 2px; white-space: nowrap; border-top-right-radius: 3px; }
    .t1 .tab { width: 92px; }
    .t2 .tab, .t3 .tab { width: 100px; padding-left: 4px; }
    .t3 { margin-right: -16px; }
    .t4 { position: relative; }
    .t4 .label { display: flex; align-items: center; width: 116px; height: 20px; background: #fff; border: 1px solid #a8a8a8; border-width: 1px 1px 0 0; border-top-right-radius: 3px; padding-left: 14px; }
    .t4 .tab { background: none; border: 0; font-weight: 700; }
    .close { margin-left: auto; margin-right: 6px; }
    .canvas { flex: 1; background: #000; display: flex; }
    .sheet { width: 100%; height: 100%; flex: 1; overflow: hidden; }
    .cad { font: 700 7px/10px "Noto Sans CJK SC", sans-serif; fill: #fff; }
    .layouts { display: flex; height: 26px; align-items: flex-start; }
    .nav { display: flex; padding: 5px 2px 0 0; width: 64px; }
    .nav button { flex: 1; display: flex; justify-content: center; }
    .lay { position: relative; height: 17px; width: 48px; line-height: 14px; display: flex; justify-content: center; padding-right: 6px; }
    .lay svg { position: absolute; left: 0; top: 0; }
    .lay span { position: relative; white-space: nowrap; }
    .lay b { font-weight: 400; }
    .lay.on { font-weight: 700; z-index: 1; padding-right: 0; }
  `;

  private drawCells() {
    return DRAW_SMALL.map(([n, label, c]) => html`
      <button title=${label} aria-label=${label}>${small(n)}</button>
      ${c === undefined ? nothing : html`<span>${c ? caret() : nothing}</span>`}`);
  }

  private bigButton(icon: string, label: string, arrow = true, cls = "big") {
    return html`<button class=${cls}>${big(icon)}<span>${label}</span>${arrow ? caret() : nothing}</button>`;
  }

  private listButton(icon: string, label: string, arrow = false) {
    return html`<button>${small(icon)}<span>${label}</span>${arrow ? caret() : nothing}</button>`;
  }

  private layout(label: string, num: string, on = false) {
    return html`<button class="lay ${on ? "on" : ""}">
      <svg viewBox="0 0 48 17" width="48" height="17" aria-hidden="true">
        <path d="M0 0L8 16H41L48 0" fill=${on ? "#fff" : "#ececec"} stroke="#999"/>
      </svg><span>${label}${num ? html`<b class="lat">${num}</b>` : nothing}</span></button>`;
  }

  render() {
    return html`
      <div class="app">
        <header class="top">
          <div class="title">
            <div class="quick">
              <button class="app-logo" aria-label="CAXA">${small("logo")}</button>
              <button aria-label="新建">${small("qNew")}</button>
              <button aria-label="打开">${small("qOpen")}</button>
              <button aria-label="保存">${small("qSave")}</button>
              <button aria-label="另存为">${small("qSaveAs")}</button>
              <button aria-label="打印">${small("qPrint")}</button>
              <button aria-label="撤销">${small("qUndo")}</button>
              <button class="narrow" aria-label="撤销列表">${caret()}</button>
              <button aria-label="重做">${small("qRedo")}</button>
              <button class="narrow dim" aria-label="重做列表">${caret()}</button>
              <button class="last" aria-label="自定义">${small("qMore")}</button>
            </div>
            <div class="caption"><span class="lat">CAXA CAD </span>电子图板<span class="lat"> 2020 - [</span>液压缸<span class="lat">.dwg*]</span></div>
          </div>
          <nav class="menus">
            <button class="first">菜单</button><button class="on">常用</button>
            ${MENUS.map((m) => html`<button>${m}</button>`)}
            <label class="search">${small("hint")}<input type="text" aria-label="功能搜索" placeholder="功能搜索..."></label>
          </nav>
        </header>

        <div class="ribbon">
          <section class="group g-draw">
            <div class="row">
              ${DRAW_BIG.map(([i, l, a]) => this.bigButton(i, l, a))}
              <div class="grid cols-draw">${this.drawCells()}</div>
            </div>
            <h2>绘图</h2>
          </section>
          <section class="group g-edit">
            <div class="grid cols-edit">
              ${EDIT.map(([n, label], i) => html`<button title=${label} aria-label=${label}>${small(n)}</button>${i % 5 === 4 ? html`<span>${caret()}</span>` : nothing}`)}
            </div>
            <h2>修改</h2>
          </section>
          <section class="group g-note">
            <div class="row">
              ${this.bigButton("dim", "尺寸")}${this.bigButton("symbol", "符号")}
              <div class="list">
                ${this.listButton("letterA", "文字", true)}${this.listButton("table", "表格")}${this.listButton("coord", "坐标", true)}
              </div>
            </div>
            <h2>标注</h2>
          </section>
          <section class="group g-prop">
            <div class="row">
              ${this.bigButton("style", "样式管理", true, "big wide")}
              <div class="props">
                <button aria-label="图层">${small("layers")}</button>${caret()}
                <label class="combo layer">
                  ${small("bulb")}${small("sun")}${small("lock")}${small("printer")}<i class="swatch"></i>
                  <select aria-label="当前图层"><option>点划线</option></select>${caret()}
                </label>
                <button aria-label="颜色">${small("wheel")}</button>
                <label class="combo"><i class="swatch color"></i>
                  <select class="lat" aria-label="颜色"><option>ByLayer</option></select>${caret()}
                </label>
                <button aria-label="线宽">${small("weight")}</button>${caret()}
                <label class="combo">
                  <svg class="stroke" width="59" height="2" aria-hidden="true"><rect width="59" height="1" fill="#000"/></svg>
                  <select class="lat" aria-label="线宽"><option>ByLayer</option></select>${caret()}
                </label>
                <button aria-label="线型">${small("ltype")}</button>
                <label class="combo">
                  <svg class="stroke-red" width="70" height="2" aria-hidden="true"><path d="M0 .5H18M23 .5H24M27 .5H43M48 .5H49M52 .5H70" stroke="#f00"/></svg>
                  <select class="lat" aria-label="线型"><option>ByLayer</option></select>${caret()}
                </label>
              </div>
            </div>
            <h2>特性</h2>
          </section>
          <section class="group g-clip">
            <div class="row">
              ${this.bigButton("paste", "粘贴")}
              <div class="list">
                ${this.listButton("cut", "剪切")}${this.listButton("copy", "复制", true)}${this.listButton("match", "特性匹配")}
              </div>
            </div>
            <h2>剪切板</h2>
          </section>
        </div>

        <div class="work">
          <aside class="side">
            <button>${small("library")}<span>图库</span></button>
            <button>${small("props")}<span>特性</span></button>
            <div class="corner"></div>
          </aside>
          <main class="main">
            <div class="docs">
              <div class="doc t1">
                <svg width="20" height="20" aria-hidden="true"><path d="M0 20L20 .5V20z" fill="#f0f0f0"/><path d="M0 20L20 .5" stroke="#a0a0a0"/></svg>
                <button class="tab">装配图<span class="lat">.dwg</span></button>
              </div>
              <div class="doc t2"><button class="tab">原理图<span class="lat">.dwg*</span></button></div>
              <div class="doc t3"><button class="tab">大齿轮<span class="lat">.dwg*</span></button></div>
              <div class="doc t4">
                <svg width="20" height="20" aria-hidden="true"><path d="M0 20L20 .5V20z" fill="#fff"/><path d="M0 20L20 .5" stroke="#a0a0a0"/></svg>
                <div class="label">
                  <button class="tab">液压缸<span class="lat">.dwg*</span></button>
                  <button class="close" aria-label="关闭"><svg width="8" height="8" aria-hidden="true"><path d="M.5 .5L7.500 7.500M7.500 .5L.5 7.500" stroke="#666" stroke-width="1.300"/></svg></button>
                </div>
              </div>
            </div>
            <div class="canvas">${drawing()}</div>
            <div class="layouts">
              <div class="nav">
                <button aria-label="首个"><svg width="8" height="8" aria-hidden="true"><path d="M1.500 1V8" stroke="#666"/><path d="M7 1V8L3 4.500z" fill="#666"/></svg></button>
                <button aria-label="上一个"><svg width="8" height="8" aria-hidden="true"><path d="M6 1V8L2 4.500z" fill="#666"/></svg></button>
                <button aria-label="下一个"><svg width="8" height="8" aria-hidden="true"><path d="M2 1V8L6 4.500z" fill="#666"/></svg></button>
                <button aria-label="末个"><svg width="8" height="8" aria-hidden="true"><path d="M1 1V8L5 4.500z" fill="#666"/><path d="M7 1V8" stroke="#666"/></svg></button>
              </div>
              ${this.layout("模型", "", true)}${this.layout("布局", "1")}${this.layout("布局", "2")}
            </div>
          </main>
        </div>
      </div>`;
  }
}
